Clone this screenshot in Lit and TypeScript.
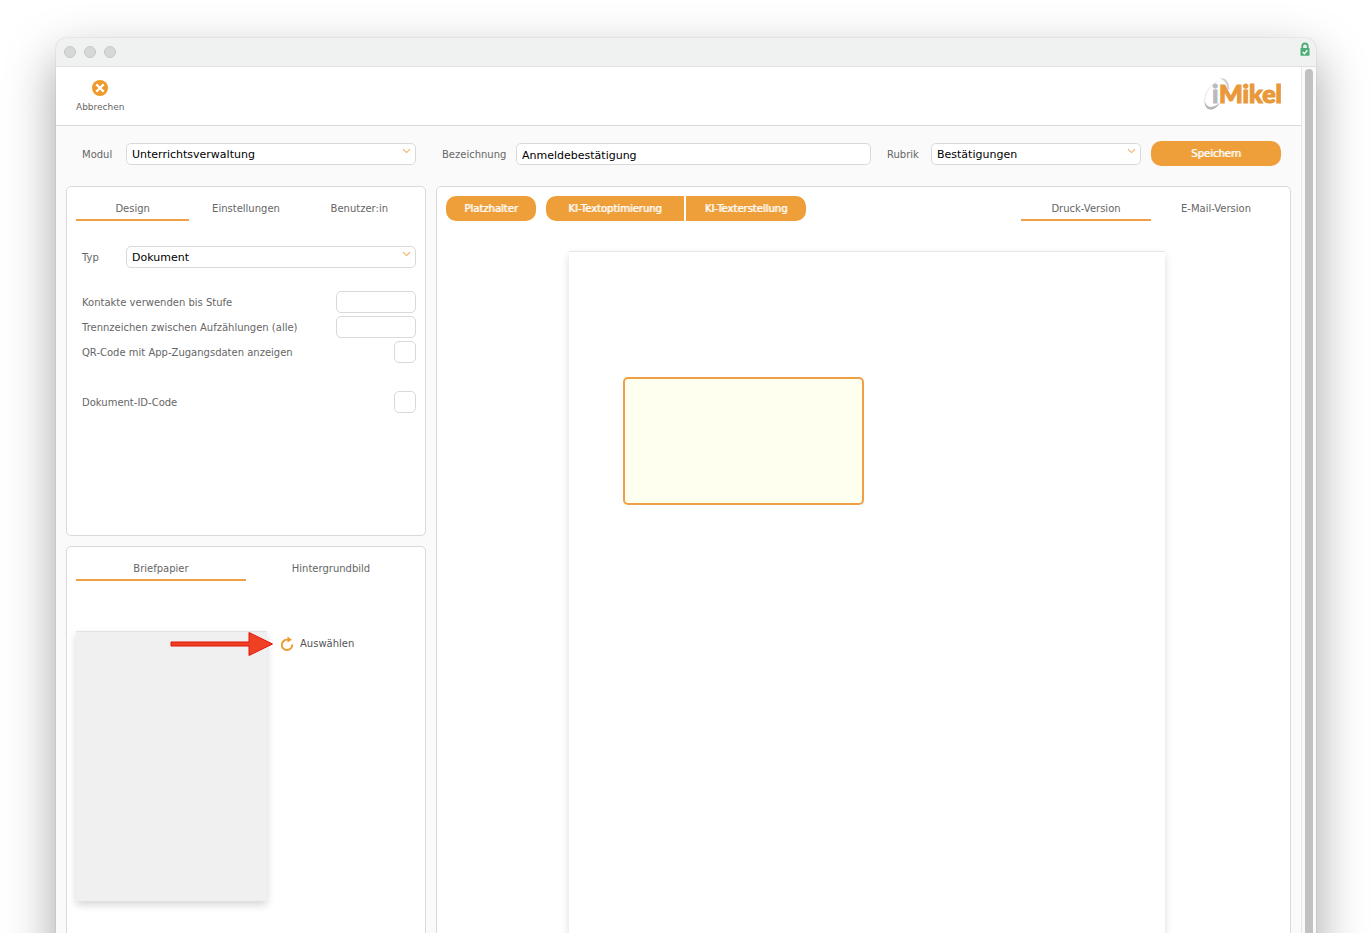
import { LitElement, html, css, svg } from "lit";
import { customElement, property, state } from "lit/decorators.js";
import { classMap } from "lit/directives/class-map.js";

const chevron = svg`<path d="M1 1.2 L4.5 4.6 L8 1.2" fill="none" stroke="#f2b063" stroke-width="1.1" />`;

@customElement("select-field")
class SelectField extends LitElement {
  @property() label = "";
  @property() value = "";

  static styles = css`
    :host { display: block; }
    .row { display: grid; grid-template-columns: 44px 1fr; align-items: center; }
    .label { padding-top: 2px; font-size: 10px; color: #666; }
    .box { display: grid; }
    .box > * { grid-area: 1 / 1; }
    .control {
      appearance: none; box-sizing: border-box; width: 100%; height: 22px; margin: 0;
      padding: 2px 16px 0 5px; border: 1px solid #d9d9d9; border-radius: 5px;
      background: #fff; color: #000; font: 11px/18px Verdana, "DejaVu Sans", sans-serif;
    }
    .arrow { justify-self: end; margin: 5px 5px 0 0; pointer-events: none; }
  `;

  render() {
    return html`<div class="row">
      <label class="label" for="control">${this.label}</label>
      <div class="box">
        <select class="control" id="control"><option>${this.value}</option></select>
        <svg class="arrow" width="9" height="6" viewBox="0 0 9 6" aria-hidden="true">${chevron}</svg>
      </div>
    </div>`;
  }
}

@customElement("tab-bar")
class TabBar extends LitElement {
  @property({ attribute: false }) tabs: string[] = [];
  @state() active = 0;

  static styles = css`
    :host { display: block; }
    .tabs { display: grid; grid-auto-flow: column; grid-auto-columns: 1fr; }
    .tab {
      height: 25px; padding: 2px 0 0; border: 0; border-bottom: 2px solid transparent;
      background: none; color: #666; font: 10px/20px Verdana, "DejaVu Sans", sans-serif;
    }
    .active { border-color: #efa046; }
  `;

  render() {
    return html`<div class="tabs" role="tablist">
      ${this.tabs.map((name, i) => html`<button
        class=${classMap({ tab: true, active: i === this.active })}
        role="tab" aria-selected=${i === this.active}
        @click=${() => (this.active = i)}>${name}</button>`)}
    </div>`;
  }
}

@customElement("app-root")
class AppRoot extends LitElement {
  static styles = css`
    :host {
      display: block; box-sizing: border-box; height: 100vh; overflow: hidden;
      padding: 38px 56px 0; background: #fff; color: #666;
      font: 10px/20px Verdana, "DejaVu Sans", sans-serif;
    }
    * { box-sizing: border-box; }
    .window {
      display: flex; flex-direction: column; height: calc(100vh + 40px);
      border-radius: 10px 10px 0 0; overflow: hidden; background: #fafafa;
      box-shadow: 0 0 1px rgba(0, 0, 0, 0.4), 0 20px 50px rgba(0, 0, 0, 0.37);
    }
    .titlebar {
      display: flex; align-items: center; gap: 8px; height: 29px; padding: 0 6px 0 8px;
      background: #f0f2f1; border-bottom: 1px solid #dfe1e0;
    }
    .dot { width: 12px; height: 12px; border-radius: 50%; background: #d6d8d7; border: 1px solid #c8cac9; }
    .lock { margin: 0 0 6px auto; }
    .main { flex: 1; display: flex; min-height: 0; }
    .content { flex: 1; display: flex; flex-direction: column; min-width: 0; }
    .scroll { width: 15px; padding: 2px 3px 0; border-left: 1px solid #e6e6e6; background: #fafafa; }
    .thumb { height: 100%; border-radius: 4px; background: #c1c1c1; }

    .header {
      display: flex; justify-content: space-between; align-items: center; height: 59px;
      padding: 0 20px; background: #fff; border-bottom: 1px solid #d9d9d9;
    }
    .cancel {
      display: flex; flex-direction: column; align-items: center; gap: 4px; padding: 1px 0 0;
      border: 0; background: none; color: #666; font: 9px/14px Verdana, "DejaVu Sans", sans-serif;
    }
    .logo { display: block; margin-bottom: 2px; }
    .logo-text { font: 900 25px Lato, sans-serif; }

    .form { display: grid; grid-template-columns: 360px 1fr; gap: 10px; padding: 15px 10px 20px; align-items: center; }
    .module { padding: 1px 10px 0 16px; }
    .details { display: grid; grid-template-columns: 74px 1fr 264px 130px; align-items: center; padding: 0 10px 0 6px; }
    .details label { padding-top: 2px; }
    .rubric { padding-right: 10px; }
    .details .text, .rubric { margin-top: 1px; }
    .name { width: calc(100% - 16px); }
    .text {
      height: 22px; margin: 0; padding: 2px 5px 0; border: 1px solid #d9d9d9; border-radius: 5px;
      background: #fff; color: #000; font: 11px/18px Verdana, "DejaVu Sans", sans-serif;
    }
    .button {
      height: 25px; padding: 0; border: 0; border-radius: 10px; background: #ee9f3a; color: #fff;
      font: 10px/25px Verdana, "DejaVu Sans", sans-serif; text-shadow: 1px 0 0 rgba(255, 255, 255, 0.7);
    }

    .panels { flex: 1; display: grid; grid-template-columns: 360px 1fr; gap: 10px; padding: 0 10px; min-height: 0; }
    .side { display: grid; grid-template-rows: 350px 1fr; gap: 10px; }
    .panel { padding: 9px; background: #fff; border: 1px solid #d9d9d9; border-radius: 5px; }
    .type { padding: 25px 0 0 6px; }
    .options { display: grid; gap: 3px; padding: 23px 0 0 6px; }
    .option { display: flex; justify-content: space-between; align-items: center; height: 22px; }
    .option label { padding-top: 2px; }
    .separate { margin-top: 25px; }
    .short { width: 80px; }
    .check { appearance: none; width: 22px; height: 22px; margin: 0; border: 1px solid #d9d9d9; border-radius: 5px; background: #fff; }

    .stationery { display: flex; align-items: flex-start; gap: 14px; position: relative; margin-top: 50px; }
    .preview {
      width: 191px; height: 270px; background: #f0f0f0; border-top: 1px solid #e2e2e2;
      box-shadow: 0 4px 8px rgba(0, 0, 0, 0.16);
    }
    .pick {
      display: flex; align-items: center; gap: 5px; height: 26px; padding: 0; border: 0;
      background: none; color: #555; font: 10px/20px Verdana, "DejaVu Sans", sans-serif;
    }
    .pointer { position: absolute; left: 94px; top: 0; pointer-events: none; }

    .tools { display: flex; align-items: center; }
    .placeholder { width: 90px; margin-right: 10px; }
    .optimise { width: 138px; margin-right: 2px; border-radius: 10px 0 0 10px; }
    .create { width: 120px; border-radius: 0 10px 10px 0; }
    .versions { width: 260px; margin-left: auto; }
    .editor { display: flex; flex-direction: column; }
    .canvas { flex: 1; display: flex; justify-content: center; padding: 30px 0 0 7px; }
    .paper {
      width: 596px; padding: 125px 54px; background: #fff; border-top: 1px solid #e6e6e6;
      box-shadow: 0 4px 8px rgba(0, 0, 0, 0.14);
    }
    .address { width: 241px; height: 128px; background: #ffffef; border: 2px solid #efa046; border-radius: 5px; }
  `;

  option(id: string, label: string, check = false, separate = false) {
    return html`<div class=${classMap({ option: true, separate })}>
      <label for=${id}>${label}</label>
      ${check
        ? html`<input class="check" id=${id} type="checkbox" />`
        : html`<input class="text short" id=${id} type="text" />`}
    </div>`;
  }

  render() {
    return html`<div class="window">
      <div class="titlebar">
        <span class="dot"></span><span class="dot"></span><span class="dot"></span>
        <svg class="lock" width="10" height="14" viewBox="0 0 10 14" aria-hidden="true">
          <path d="M2.3 7V4.200a2.700 2.700 0 0 1 5.400 0V7" fill="none" stroke="#4cae74" stroke-width="1.800" />
          <rect x=".5" y="6" width="9" height="7.800" rx=".6" fill="#4cae74" />
          <path d="M2.700 10l1.700 1.700 3-3.400" fill="none" stroke="#fff" stroke-width="1.300" />
        </svg>
      </div>
      <div class="main">
        <div class="content">
          <header class="header">
            <button class="cancel">
              <svg width="16" height="16" viewBox="0 0 16 16" aria-hidden="true">
                <circle cx="8" cy="8" r="8" fill="#ee9b2d" />
                <path d="M4.300 4.300l7.400 7.400M11.700 4.300l-7.400 7.400" stroke="#fff" stroke-width="2.300" />
              </svg>
              Abbrechen
            </button>
            <svg class="logo" width="78" height="36" viewBox="0 0 78 36" role="img" aria-label="iMikel">
              <path d="M14.500 4.500C8 7.500 2 15 1.800 23" fill="none" stroke="#ddd" stroke-width=".8" />
              <path d="M17 1.500c6-1 9 3.500 9.500 11h-1.500C24 7 21.500 3 17 1.500z" fill="#cfcfd1" />
              <path d="M1.500 22c.5 9 8 10.500 15.500 3.500C12 35.500.5 35.500 1.500 22z" fill="#b4b4b6" />
              <text class="logo-text" x="9" y="26" fill="#b9b9bd" stroke="#b9b9bd" stroke-width=".8">i</text>
              <text class="logo-text" x="16" y="26" fill="#e9983a" stroke="#e9983a" stroke-width="1.100">Mikel</text>
            </svg>
          </header>
          <div class="form">
            <select-field class="module" label="Modul" value="Unterrichtsverwaltung"></select-field>
            <div class="details">
              <label for="name">Bezeichnung</label>
              <input class="text name" id="name" type="text" value="Anmeldebestätigung" />
              <select-field class="rubric" label="Rubrik" value="Bestätigungen"></select-field>
              <button class="button">Speichern</button>
            </div>
          </div>
          <div class="panels">
            <div class="side">
              <section class="panel">
                <tab-bar .tabs=${["Design", "Einstellungen", "Benutzer:in"]}></tab-bar>
                <select-field class="type" label="Typ" value="Dokument"></select-field>
                <div class="options">
                  ${this.option("level", "Kontakte verwenden bis Stufe")}
                  ${this.option("separator", "Trennzeichen zwischen Aufzählungen (alle)")}
                  ${this.option("qr", "QR-Code mit App-Zugangsdaten anzeigen", true)}
                  ${this.option("docid", "Dokument-ID-Code", true, true)}
                </div>
              </section>
              <section class="panel">
                <tab-bar .tabs=${["Briefpapier", "Hintergrundbild"]}></tab-bar>
                <div class="stationery">
                  <div class="preview"></div>
                  <button class="pick">
                    <svg width="14" height="16" viewBox="0 0 14 16" aria-hidden="true">
                      <path d="M7.500 3.600A5.200 5.200 0 1 0 11.500 8.200" fill="none" stroke="#ee9b2d" stroke-width="1.900" transform="translate(-.3 .2)" />
                      <path d="M6.500 .5L11 3.800 6.500 6.500z" fill="#ee9b2d" />
                    </svg>
                    Auswählen
                  </button>
                  <svg class="pointer" width="104" height="26" viewBox="0 0 104 26" aria-hidden="true">
                    <path d="M1 11H79V1.500L102.500 13 79 24.500V15H1z" fill="#ee4023" stroke="#e3120b" />
                  </svg>
                </div>
              </section>
            </div>
            <section class="panel editor">
              <div class="tools">
                <button class="button placeholder">Platzhalter</button>
                <button class="button optimise">KI-Textoptimierung</button>
                <button class="button create">KI-Texterstellung</button>
                <tab-bar class="versions" .tabs=${["Druck-Version", "E-Mail-Version"]}></tab-bar>
              </div>
              <div class="canvas">
                <div class="paper"><div class="address"></div></div>
              </div>
            </section>
          </div>
        </div>
        <div class="scroll"><div class="thumb"></div></div>
      </div>
    </div>`;
  }
}
